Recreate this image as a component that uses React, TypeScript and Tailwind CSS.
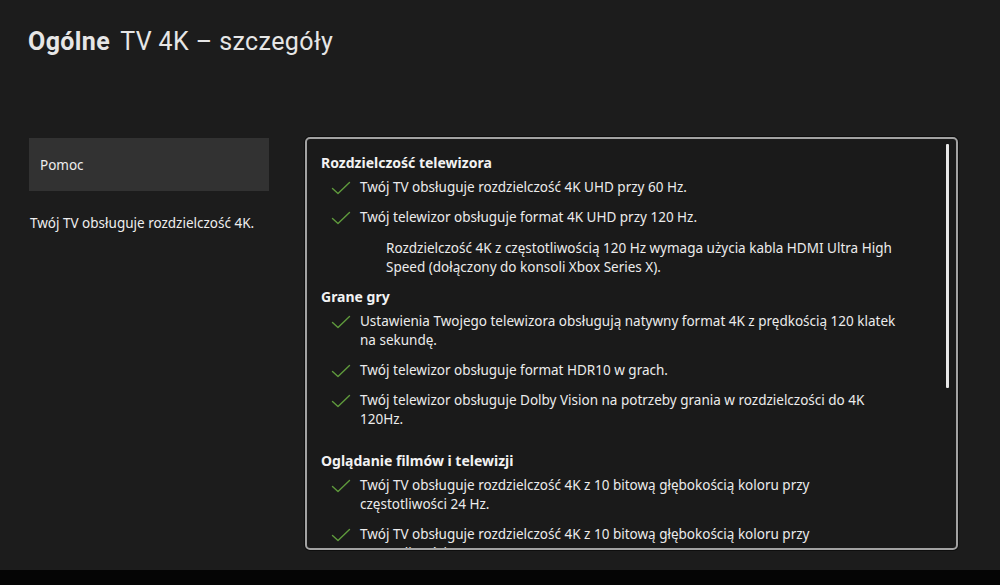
import React from 'react';

const Check: React.FC = () => (
  <svg width="20" height="14" viewBox="0 0 20 14" className="shrink-0 mt-[3px]">
    <path d="M1.5 7.5 L7 12.5 L18.5 1.5" fill="none" stroke="#5f9a3c" strokeWidth="1.4" strokeLinecap="round" strokeLinejoin="round" />
  </svg>
);

// each item is given as its display lines, as the console wraps them
type Item = { lines: string[]; note?: string[] };

const Section: React.FC<{ title: string; items: Item[]; className?: string }> = ({ title, items, className }) => (
  <section className={className}>
    <h3 className="font-bold text-[14px] leading-[19px] text-[#f2f2f2]">{title}</h3>
    <ul className="mt-[6px] flex flex-col gap-[11px]">
      {items.map((it, i) => (
        <li key={i} className="pl-[10px]">
          <div className="flex gap-[9px] items-start">
            <Check />
            <p>
              {it.lines.map((l, j) => (
                <span key={j} className="block whitespace-nowrap">{l}</span>
              ))}
            </p>
          </div>
          {it.note && (
            <p className="mt-[12px] pl-[55px]">
              {it.note.map((l, j) => (
                <span key={j} className="block whitespace-nowrap">{l}</span>
              ))}
            </p>
          )}
        </li>
      ))}
    </ul>
  </section>
);

export default function App() {
  return (
    <div
      className="w-[1000px] h-[585px] bg-[#1c1c1c] flex flex-col overflow-hidden text-[#ececec]"
      style={{ fontFamily: '"Noto Sans", "Open Sans", sans-serif' }}
    >
      <header className="pl-[28px] pt-[26px] h-[137px] shrink-0">
        <h1 className="text-[25px] leading-[32px] text-[#e6e6e6] tracking-[0.4px]" style={{ fontFamily: 'Roboto, "Noto Sans", sans-serif' }}>
          <span className="font-bold">Ogólne</span>
          <span className="ml-[10px]">TV 4K – szczegóły</span>
        </h1>
      </header>

      <main className="flex flex-1 min-h-0">
        <aside className="w-[277px] shrink-0 pl-[29px] pt-[1px]">
          <div className="w-[240px] h-[53px] bg-[#323232] flex items-center pl-[11px] pt-[2px] text-[13.5px] text-[#eeeeee]">
            Pomoc
          </div>
          <p className="mt-[23px] pl-[1px] text-[13.5px] leading-[19px] text-[#eeeeee]">
            Twój TV obsługuje rozdzielczość 4K.
          </p>
        </aside>

        <div className="ml-[28px] w-[653px] h-[413px] rounded-[5px] border-2 border-[#a2a2a2] bg-[#1a1a1a] relative overflow-hidden shadow-[0_0_0_1px_#0e0e0e]">
          <div className="absolute right-[7px] top-[5px] w-[3px] h-[244px] bg-[#e8e8e8] rounded-[1px]" />
          <div className="pl-[14px] pt-[14px] text-[13.5px] leading-[19px] text-[#ececec]">
            <Section
              title="Rozdzielczość telewizora"
              items={[
                { lines: ['Twój TV obsługuje rozdzielczość 4K UHD przy 60 Hz.'] },
                {
                  lines: ['Twój telewizor obsługuje format 4K UHD przy 120 Hz.'],
                  note: [
                    'Rozdzielczość 4K z częstotliwością 120 Hz wymaga użycia kabla HDMI Ultra High',
                    'Speed (dołączony do konsoli Xbox Series X).',
                  ],
                },
              ]}
            />
            <Section
              className="mt-[10px]"
              title="Grane gry"
              items={[
                { lines: ['Ustawienia Twojego telewizora obsługują natywny format 4K z prędkością 120 klatek', 'na sekundę.'] },
                { lines: ['Twój telewizor obsługuje format HDR10 w grach.'] },
                { lines: ['Twój telewizor obsługuje Dolby Vision na potrzeby grania w rozdzielczości do 4K', '120Hz.'] },
              ]}
            />
            <Section
              className="mt-[22px]"
              title="Oglądanie filmów i telewizji"
              items={[
                { lines: ['Twój TV obsługuje rozdzielczość 4K z 10 bitową głębokością koloru przy', 'częstotliwości 24 Hz.'] },
                { lines: ['Twój TV obsługuje rozdzielczość 4K z 10 bitową głębokością koloru przy', 'częstotliwości 50 Hz.'] },
              ]}
            />
          </div>
        </div>
      </main>

      <div className="h-[15px] bg-[#050505] shrink-0" />
    </div>
  );
}
